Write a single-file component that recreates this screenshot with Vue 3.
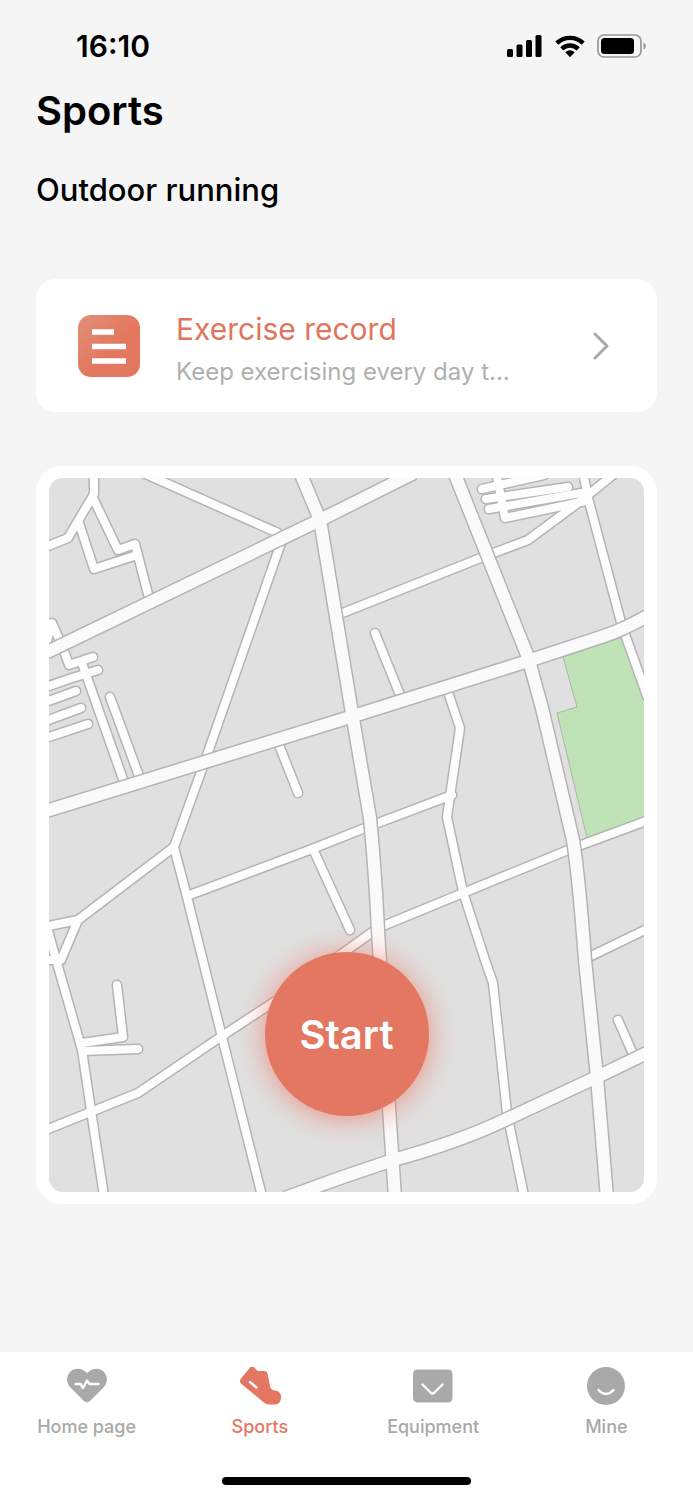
<template>
  <div class="page">
    <header class="status-bar">
      <time class="status-bar__time">16:10</time>
      <div class="status-bar__icons">
        <svg width="36" height="24" viewBox="0 0 36 24" aria-hidden="true">
          <rect x="0" y="15" width="6" height="8" rx="1.5" />
          <rect x="9.5" y="10.5" width="6" height="12.5" rx="1.5" />
          <rect x="19" y="6" width="6" height="17" rx="1.5" />
          <rect x="28.5" y="1" width="6" height="22" rx="1.5" />
        </svg>
        <svg width="30" height="24" viewBox="0 0 30 24" aria-hidden="true">
          <g fill="none" stroke="#000" stroke-width="4.4">
            <path d="M1.8 9.2a19 19 0 0 1 26.4 0" />
            <path d="M6.8 14.8a11.8 11.8 0 0 1 16.4 0" />
          </g>
          <path d="M15 23.2l-4.7-4.9a6.6 6.6 0 0 1 9.4 0z" />
        </svg>
        <svg width="50" height="24" viewBox="0 0 50 24" aria-hidden="true">
          <rect x="1" y="1" width="43" height="22" rx="6" fill="none" stroke="#979797" stroke-width="1.7" />
          <rect x="4" y="4" width="33" height="16" rx="3.5" />
          <path d="M46.5 8.5c3 1 3 6 0 7z" fill="#979797" />
        </svg>
      </div>
    </header>

    <main class="content">
      <h1 class="content__title">Sports</h1>
      <h2 class="content__subtitle">Outdoor running</h2>

      <a href="#record" class="record">
        <svg class="record__icon" viewBox="0 0 62 62" aria-hidden="true">
          <defs>
            <linearGradient id="record-bg" x1="0" y1="0" x2="1" y2="1">
              <stop offset="0" stop-color="#e29079" />
              <stop offset="0.55" stop-color="#e3785f" />
              <stop offset="1" stop-color="#e3765f" />
            </linearGradient>
          </defs>
          <rect width="62" height="62" rx="13" fill="url(#record-bg)" />
          <path d="M14 17h22M14 31.5h34M14 46h34" stroke="#fff" stroke-width="5.6" />
        </svg>
        <span class="record__info">
          <span class="record__title">Exercise record</span>
          <span class="record__desc">Keep exercising every day t...</span>
        </span>
        <svg class="record__arrow" viewBox="0 0 16 28" aria-hidden="true">
          <path d="M2 2l12 12L2 26" fill="none" stroke="#a9a9a9" stroke-width="3" stroke-linecap="round" stroke-linejoin="round" />
        </svg>
      </a>

      <section class="map-card">
        <svg class="map-card__map" viewBox="0 0 595 714" role="img" aria-label="Map">
          <rect width="595" height="714" fill="#e0e0e0" />
          <path class="map-card__park" d="M514 179L574 159L597 226V343L538 360L508 235L528 229Z" />
          <g class="map-card__lane map-card__lane--edge">
            <path v-for="(d, i) in lanes" :key="i" :d="d" />
          </g>
          <g class="map-card__lane">
            <path v-for="(d, i) in lanes" :key="i" :d="d" />
          </g>
          <g class="map-card__road map-card__road--edge">
            <path v-for="(d, i) in roads" :key="i" :d="d" />
          </g>
          <g class="map-card__road">
            <path v-for="(d, i) in roads" :key="i" :d="d" />
          </g>
        </svg>
        <button type="button" class="map-card__start">Start</button>
      </section>
    </main>

    <footer class="tab-bar">
      <nav class="tab-bar__list">
        <a
          v-for="tab in tabs"
          :key="tab.id"
          :href="`#${tab.id}`"
          class="tab-bar__item"
          :class="{ 'tab-bar__item--active': tab.id === activeTab }"
          @click="activeTab = tab.id"
        >
          <svg class="tab-bar__icon" viewBox="0 0 44 40" aria-hidden="true">
            <path :d="tab.shape" fill="currentColor" />
            <path :d="tab.line" fill="none" stroke="#fff" stroke-width="2.4" stroke-linecap="round" stroke-linejoin="round" />
          </svg>
          <span>{{ tab.label }}</span>
        </a>
      </nav>
      <div class="tab-bar__indicator"></div>
    </footer>
  </div>
</template>

<script setup>
import { ref } from 'vue'

const activeTab = ref('sports')

const tabs = [
  {
    id: 'home',
    label: 'Home page',
    shape:
      'M22 7C17 1.5 9.5 1.5 5.5 5.5C1 10 1 17 5.5 21.5L19 35C21 36.8 23 36.8 25 35L38.5 21.5C43 17 43 10 38.5 5.5C34.5 1.5 27 1.5 22 7Z',
    line: 'M10.5 18H15.5L18 22L22 14.5L24.5 18H33.5'
  },
  {
    id: 'sports',
    label: 'Sports',
    shape:
      'M11.5 2.2C13 .4 15 .4 16.5 1.8L18.500 4C19.500 5 20.500 5.200 22 5H25.500C28 4.800 29.300 6 29.700 8L32 20C32.500 23 34 24.300 37 24.500C41 25 43 27.500 43 31C43 36 40.500 38.500 36.500 38.500H32C29.500 38.500 27.500 37.800 25.500 36.200L3.500 18C1.800 16.500 1.600 14.500 2.800 12.800Z',
    line: 'M12 16L18.5 21.5'
  },
  {
    id: 'equipment',
    label: 'Equipment',
    shape:
      'M7 3.5H36.5Q41.5 3.5 41.5 8.5V31.5Q41.5 36.5 36.5 36.5H7Q2 36.5 2 31.5V8.5Q2 3.5 7 3.5Z',
    line: 'M11.5 18.5L19.5 26.5Q21.5 28.3 23.5 26.5L31.5 18.5'
  },
  {
    id: 'mine',
    label: 'Mine',
    shape: 'M22 1A19 19 0 1 1 22 39A19 19 0 1 1 22 1Z',
    line: 'M14.5 24Q22 32 29.5 24'
  }
]

// 小路
const lanes = [
  'M45 -6V16L19 60L-6 70',
  'M44 20L69 72L86 66L100 120',
  'M30 45L45 91L85 78',
  'M92 -6L229 55',
  'M233 62L157 280L125 369L29 442L-6 449',
  'M29 442L12 482H-6',
  'M-2 449L8 485L33 572L43 639L55 718',
  'M125 369L138 419L173 559L213 718',
  'M138 418L263 371L321 348L403 317',
  'M264 371L301 452',
  'M230 267L249 315',
  'M326 155L351 217',
  'M291 136L434 79L479 62L533 22L565 -4',
  'M534 -6L539 20L573 148L598 218',
  'M433 11L495 -3',
  'M437 21L519 9',
  'M440 31L532 15',
  'M447 -6L456 40L537 23',
  'M-2 163L3 145L14 170L20 187L44 179',
  'M33 185L75 304',
  'M49 192L23 200L-6 210',
  'M27 213L-6 225',
  'M32 230L-6 244',
  'M39 246L-6 261',
  'M61 219L90 298',
  'M68 507L74 559L33 565',
  'M89 571L34 573',
  'M-6 653L89 615L173 558L228 522L329 450L414 415L524 370L600 342',
  'M399 214L411 250L398 339L414 414L436 482L444 505L458 635L475 718',
  'M540 479L600 450',
  'M569 542L584 576'
]

// 主路
const roads = [
  'M-6 176L271 42L365 -5',
  'M251 -6L271 42L303 235L321 340Q326 390 329 452L337 585L346 720',
  'M405 -6L479 179L493 230L524 362Q530 400 536 482L548 599L558 720',
  'M-6 334L298 240L479 183L555 158Q578 150 600 137',
  'M236 720L291 700L344 682Q410 664 458 641L548 599L600 574'
]
</script>

<style>
body {
  background: #f5f5f5;
}
</style>

<style scoped>
.page {
  display: flex;
  flex-direction: column;
  min-height: 100vh;
  background: #f5f5f5;
  color: #000;
  font-family: Inter, 'Liberation Sans', sans-serif;
}

.status-bar {
  display: flex;
  align-items: center;
  justify-content: space-between;
  padding: 28px 46px 0 76px;
}

.status-bar__time {
  font-size: 30px;
  font-weight: 600;
  line-height: 36px;
}

.status-bar__icons {
  display: flex;
  align-items: center;
  gap: 12px;
}

.content {
  flex: 1;
  padding: 20px 36px;
}

.content__title {
  margin: 0;
  font-size: 40px;
  font-weight: 600;
  line-height: 54px;
}

.content__subtitle {
  margin: 32px 0 0;
  font-size: 31px;
  font-weight: 500;
  line-height: 40px;
}

.record {
  display: flex;
  align-items: center;
  gap: 36px;
  margin-top: 69px;
  padding: 24px 48px 24px 42px;
  border-radius: 20px;
  background: #fff;
  text-decoration: none;
}

.record__icon {
  flex: 0 0 62px;
  height: 62px;
}

.record__info {
  display: flex;
  flex: 1;
  flex-direction: column;
  min-width: 0;
}

.record__title {
  color: #e0745d;
  font-size: 30px;
  line-height: 52px;
}

.record__desc {
  overflow: hidden;
  color: #b0b0b0;
  font-size: 24px;
  line-height: 33px;
  text-overflow: ellipsis;
  white-space: nowrap;
}

.record__arrow {
  flex: 0 0 16px;
  height: 28px;
}

.map-card {
  position: relative;
  margin-top: 54px;
  padding: 12px 13px;
  border-radius: 26px;
  background: #fff;
}

.map-card__map {
  display: block;
  width: 100%;
  border-radius: 14px;
}

.map-card__park {
  fill: #bfe2b7;
  stroke: #a9b9a5;
}

.map-card__lane,
.map-card__road {
  fill: none;
  stroke-linejoin: round;
}

.map-card__lane {
  stroke: #fdfdfd;
  stroke-width: 8px;
  stroke-linecap: round;
}

.map-card__lane--edge {
  stroke: #b4b4b4;
  stroke-width: 11px;
}

.map-card__road {
  stroke: #fafafa;
  stroke-width: 12px;
}

.map-card__road--edge {
  stroke: #b4b4b4;
  stroke-width: 15px;
}

.map-card__start {
  position: absolute;
  bottom: 88px;
  left: 50%;
  width: 164px;
  height: 164px;
  padding: 0;
  border: 0;
  border-radius: 50%;
  background: #e37761;
  box-shadow: 0 2px 28px rgba(240, 100, 75, 0.65);
  color: #fff;
  font-family: inherit;
  font-size: 40px;
  font-weight: 600;
  transform: translateX(-50%);
  cursor: pointer;
}

.tab-bar {
  padding: 14px 0 15px;
  background: #fff;
}

.tab-bar__list {
  display: grid;
  grid-template-columns: repeat(4, 1fr);
}

.tab-bar__item {
  display: flex;
  flex-direction: column;
  align-items: center;
  gap: 9px;
  color: #a9a9a9;
  font-size: 18px;
  font-weight: 500;
  line-height: 24px;
  text-decoration: none;
}

.tab-bar__item--active {
  color: #e37761;
}

.tab-bar__icon {
  width: 44px;
  height: 40px;
}

.tab-bar__indicator {
  width: 36%;
  height: 8px;
  margin: 38px auto 0;
  border-radius: 4px;
  background: #000;
}
</style>
